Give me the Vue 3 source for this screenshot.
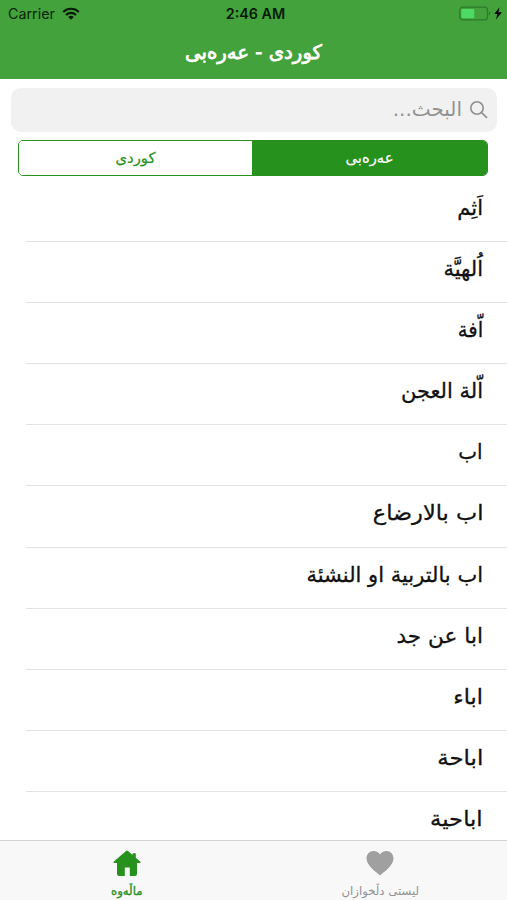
<script setup>
import { ref } from 'vue'

// 词条列表，stretch 为文字的横向拉伸比例
const words = [
  { text: 'اَثِم', stretch: 1 },
  { text: 'اُلهيَّة', stretch: 1 },
  { text: 'اّفة', stretch: 0.94 },
  { text: 'اّلة العجن', stretch: 1 },
  { text: 'اب', stretch: 0.95 },
  { text: 'اب بالارضاع', stretch: 1.07 },
  { text: 'اب بالتربية او النشئة', stretch: 1 },
  { text: 'ابا عن جد', stretch: 1.03 },
  { text: 'اباء', stretch: 1.06 },
  { text: 'اباحة', stretch: 1.09 },
  { text: 'اباحية', stretch: 1.08 }
]

// 当前语言
const lang = ref('ar')
const keyword = ref('')
</script>

<template>
  <div class="phone">
    <header class="header">
      <div class="status-bar">
        <div class="carrier">
          <span>Carrier</span>
          <svg class="wifi" viewBox="0 0 18 13" width="18" height="13">
            <path d="M1.2 4.9a11.2 11.2 0 0 1 15.6 0" />
            <path d="M4 7.9a7.1 7.1 0 0 1 10 0" />
            <path class="dot" d="M6.2 10a4 4 0 0 1 5.6 0L9 12.8z" />
          </svg>
        </div>
        <div class="time">2:46 AM</div>
        <div class="power">
          <svg viewBox="0 0 44 16" width="44" height="16">
            <rect x="0.7" y="1.2" width="27.8" height="12.6" rx="3" fill="none" stroke="#2c7a29" stroke-width="1.2" />
            <rect x="2.3" y="3" width="13" height="9.2" rx="1" fill="#4cd964" />
            <path d="M30 5.5q2.4 2 0 4z" fill="#267326" />
            <path d="M40.6 1.2l-5.4 6.7h3.2l-1.5 5.7 6-7.3h-3.5z" fill="#000" />
          </svg>
        </div>
      </div>
      <h1 class="title" dir="rtl">کوردی - عەرەبی</h1>
    </header>

    <div class="search" dir="rtl">
      <svg viewBox="0 0 20 20" width="20" height="20">
        <circle cx="8" cy="8" r="6.2" />
        <path d="M12.6 12.6l5.4 5.2" />
      </svg>
      <input v-model="keyword" class="search-input" type="text" placeholder="البحث..." />
    </div>

    <div class="segment">
      <button class="segment-item" :class="{ active: lang === 'ku' }" @click="lang = 'ku'">کوردی</button>
      <button class="segment-item" :class="{ active: lang === 'ar' }" @click="lang = 'ar'">عەرەبی</button>
    </div>

    <ul class="list" dir="rtl">
      <li v-for="word in words" :key="word.text" class="row">
        <span class="word" :style="{ transform: `scaleX(${word.stretch})` }">{{ word.text }}</span>
      </li>
    </ul>

    <nav class="tab-bar">
      <a class="tab active">
        <svg viewBox="0 0 28 27" width="28" height="27">
          <path d="M14 .4q.5 0 1 .5l4.600 4V3.200h3.200v4.500l4.600 4.100q.6.8-.4 1.100H24V24q0 2-2 2h-5.200v-8.400h-5V26H6q-2 0-2-2V12.900H1q-1-.3-.4-1.100L13 .9q.5-.5 1-.5z" />
        </svg>
        <span>ماڵەوە</span>
      </a>
      <a class="tab">
        <svg viewBox="0 0 28 27" width="28" height="27">
          <path d="M14 25.500C10 22 .5 15.500.5 8.500C.5 4 3.800 1 7.400 1C10.500 1 12.800 2.300 14 4.500C15.200 2.300 17.500 1 20.600 1C24.200 1 27.500 4 27.500 8.500C27.500 15.500 18 22 14 25.500z" />
        </svg>
        <span>لیستی دڵخوازان</span>
      </a>
    </nav>
  </div>
</template>

<style>
body {
  margin: 0;
  overflow: hidden;
}
</style>

<style scoped>
.phone {
  display: flex;
  flex-direction: column;
  width: 507px;
  height: 900px;
  overflow: hidden;
  background: #fff;
  font-family: "DejaVu Sans", sans-serif;
}

.header {
  flex: none;
  height: 79px;
  background: #43a23c;
}

.status-bar {
  display: grid;
  grid-template-columns: 1fr auto 1fr;
  align-items: center;
  height: 27px;
  padding: 0 4px 0 8px;
  font-family: Inter, sans-serif;
  font-size: 14.3px;
  color: #0b250a;
}

.carrier {
  display: flex;
  align-items: center;
  gap: 7px;
}

.wifi {
  fill: none;
  stroke: #061a05;
  stroke-width: 2.1;
}

.wifi .dot {
  fill: #061a05;
  stroke: none;
}

.time {
  font-weight: 600;
  color: #061a05;
}

.power {
  display: flex;
  justify-content: flex-end;
}

.title {
  margin: 0;
  font-size: 19.7px;
  font-weight: normal;
  line-height: 52px;
  text-align: center;
  color: #fff;
  -webkit-text-stroke: 0.8px #fff;
}

.search {
  flex: none;
  display: flex;
  align-items: center;
  gap: 7px;
  height: 44px;
  margin: 9px 10px 0 11px;
  padding: 0 8px;
  box-sizing: border-box;
  border-radius: 10px;
  background: #f1f1f1;
}

.search svg {
  flex: none;
  fill: none;
  stroke: #8e8e93;
  stroke-width: 1.6;
}

.search-input {
  flex: 1;
  min-width: 0;
  padding: 0 0 2px;
  border: none;
  outline: none;
  background: transparent;
  font-family: inherit;
  font-size: 20px;
}

.search-input::placeholder {
  color: #929292;
  opacity: 1;
}

.segment {
  flex: none;
  display: grid;
  grid-template-columns: 233px 1fr;
  height: 36px;
  margin: 8px 19px 0 18px;
  box-sizing: border-box;
  border: 1px solid #27911d;
  border-radius: 5px;
  overflow: hidden;
}

.segment-item {
  padding: 0 0 2px;
  border: none;
  background: #fff;
  font-family: inherit;
  font-size: 14.8px;
  color: #27911d;
  -webkit-text-stroke: 0.2px;
}

.segment-item.active {
  background: #27911d;
  color: #fff;
}

.list {
  flex: 1;
  min-height: 0;
  margin: 5px 0 0;
  padding: 0;
  overflow: hidden;
  list-style: none;
}

.row {
  height: 61.1px;
  margin-left: 26px;
  padding-right: 24px;
  box-sizing: border-box;
  border-bottom: 1px solid #e3e3e5;
  font-size: 21px;
  line-height: 54px;
  color: #111;
  -webkit-text-stroke: 0.3px;
}

.word {
  display: inline-block;
  transform-origin: right center;
}

.tab-bar {
  flex: none;
  display: flex;
  height: 60px;
  box-sizing: border-box;
  border-top: 1px solid #d4d4d4;
  background: #f8f8f8;
}

.tab {
  flex: 1;
  display: flex;
  flex-direction: column;
  align-items: center;
  gap: 7px;
  padding-top: 9px;
  font-size: 11.7px;
  line-height: 14px;
  color: #929292;
}

.tab svg {
  fill: #a0a0a0;
}

.tab.active {
  color: #27911d;
  -webkit-text-stroke: 0.3px;
}

.tab.active svg {
  fill: #27911d;
}
</style>
